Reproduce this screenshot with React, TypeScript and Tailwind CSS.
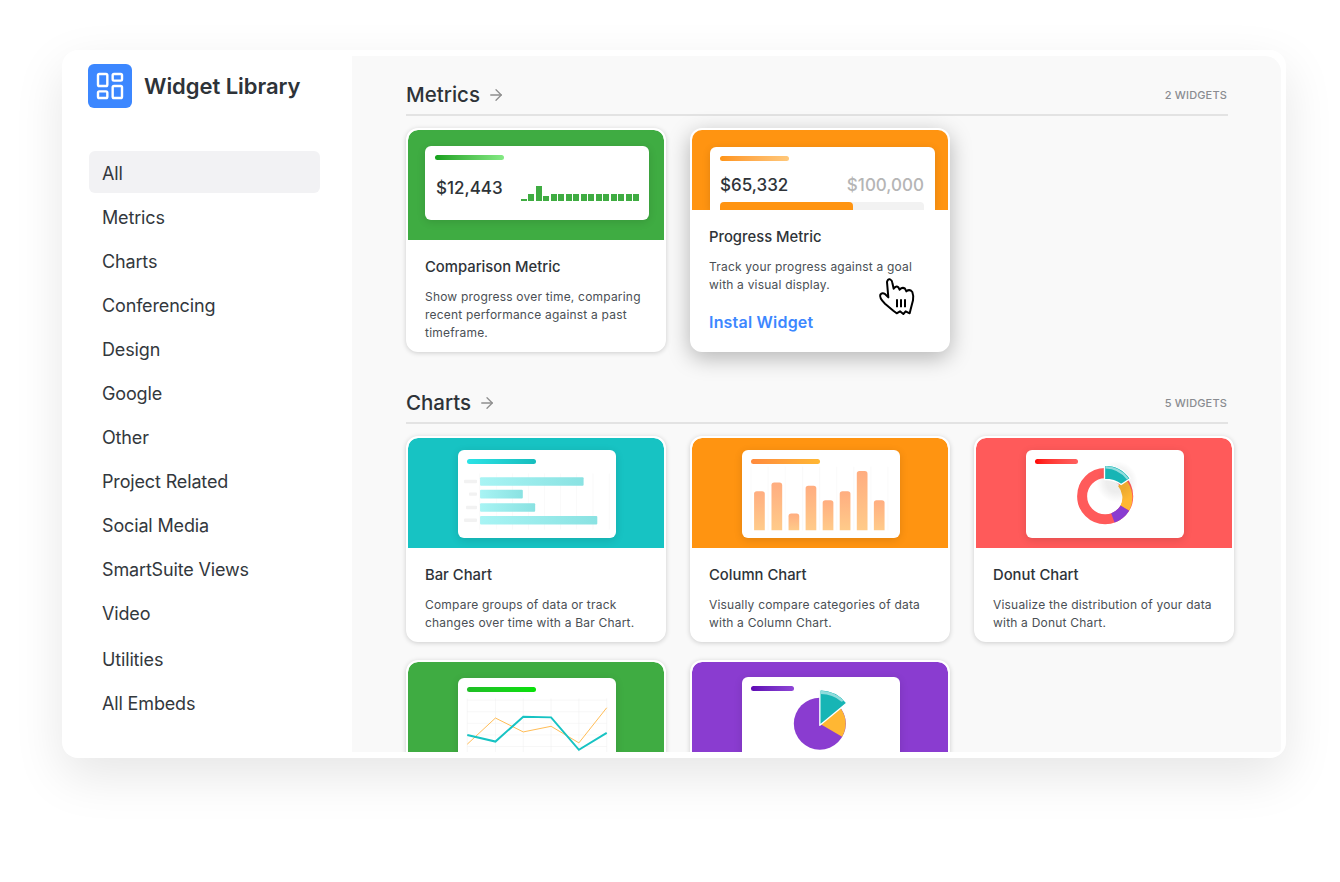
import { ArrowRight, LayoutDashboard } from "lucide-react";
import type { ReactNode } from "react";

const navItems = [
  "All",
  "Metrics",
  "Charts",
  "Conferencing",
  "Design",
  "Google",
  "Other",
  "Project Related",
  "Social Media",
  "SmartSuite Views",
  "Video",
  "Utilities",
  "All Embeds",
];

const sparkHeights = [2.5, 7, 15, 5, 7, 7, 7, 7, 7, 7, 7, 7, 7, 7, 7, 7];

const Sidebar = () => (
  <aside className="w-[290px] shrink-0 pl-[26px] pt-[14px]">
    <div className="flex items-center gap-3">
      <div className="flex h-11 w-11 items-center justify-center rounded-md bg-[#3c87ff]">
        <LayoutDashboard size={32} strokeWidth={1.8} className="text-white" />
      </div>
      <span className="text-[22px] font-semibold tracking-[-0.05px] text-[#2e3338]">Widget Library</span>
    </div>
    <nav className="ml-px mt-[43px] flex w-[231px] flex-col gap-[2px]">
      {navItems.map((item) => (
        <div
          key={item}
          className={`flex h-[42px] items-center rounded-md pl-[13px] pt-[2px] text-[18px] tracking-[-0.15px] text-[#33383d] ${
            item === "All" ? "bg-[#f2f2f4]" : ""
          } ${item === "Utilities" ? "mt-[2px]" : ""}`}
        >
          {item}
        </div>
      ))}
    </nav>
  </aside>
);

const SectionHeader = ({ title, count }: { title: string; count: string }) => (
  <div className="mb-3 flex h-9 w-[822px] items-start justify-between border-b-2 border-[#e3e3e3]">
    <div className="flex h-7 items-center gap-[7px] pt-[2px]">
      <h2 className="text-[20.5px] font-medium text-[#2e3338]">{title}</h2>
      <ArrowRight size={18} strokeWidth={1.7} className="text-[#8e8e8e]" />
    </div>
    <span className="flex h-7 items-center pr-px pt-[2px] text-[11px] font-medium uppercase tracking-[0.15px] text-[#8a8c91]">{count}</span>
  </div>
);

const Card = ({
  color,
  title,
  desc,
  art,
}: {
  color: string;
  title: string;
  desc: ReactNode;
  art: ReactNode;
}) => (
  <div className="overflow-hidden rounded-xl border-2 border-white bg-white shadow-[0_1px_5px_rgba(0,0,0,0.18)]">
    <div className={`flex h-[110px] items-start justify-center rounded-t-[10px] ${color}`}>{art}</div>
    <div className="px-[17px] pb-2 pt-[18px]">
      <h3 className="text-[14.8px] font-medium leading-[18px] text-[#2e3338]">{title}</h3>
      <p className="mt-3 text-[12px] leading-[18px] tracking-[0.2px] text-[#4a4f55]">{desc}</p>
    </div>
  </div>
);

const Panel = ({ children, accent, bar }: { children: ReactNode; accent?: string; bar: string }) => (
  <div className="relative ml-[2px] mt-3 h-[88px] w-[158px] overflow-hidden rounded-md bg-white shadow-[0_2px_8px_rgba(0,0,0,0.12)]">
    <div className={`absolute left-[9px] top-[9px] h-[5px] rounded-full ${accent ?? "w-[69px]"} ${bar}`} />
    {children}
  </div>
);

const ComparisonArt = () => (
  <div className="ml-[2px] mt-4 h-[74px] w-[224px] rounded-md bg-white px-[10px] pt-[9px] shadow-[0_2px_8px_rgba(0,0,0,0.12)]">
    <div className="h-[5px] w-[69px] rounded-full bg-gradient-to-r from-[#12a11a] to-[#84ea84]" />
    <div className="mt-[15px] flex items-end justify-between">
      <span className="ml-px text-[17px] font-medium leading-[26px] text-[#2e3338]">$12,443</span>
      <div className="flex items-end gap-[1.5px]">
        {sparkHeights.map((h, i) => (
          <div key={i} className="w-[6px] bg-[#3fac42]" style={{ height: h }} />
        ))}
      </div>
    </div>
  </div>
);

const ProgressArt = () => (
  <div className="ml-[5px] mt-[17px] h-[63px] w-[225px] overflow-hidden rounded-t-md bg-white pl-[10px] pr-[11px] pt-[9px] shadow-[0_2px_8px_rgba(0,0,0,0.12)]">
    <div className="h-[5px] w-[69px] rounded-full bg-gradient-to-r from-[#ff9411] to-[#ffc87a]" />
    <div className="mt-[11px] flex items-center justify-between text-[17px] font-medium leading-[26px]">
      <span className="text-[#2e3338]">$65,332</span>
      <span className="text-[#b5b5b5]">$100,000</span>
    </div>
    <div className="mt-[4px] h-2 overflow-hidden rounded-t-sm bg-[#f2f2f2]">
      <div className="h-full w-[133px] rounded-tr-sm bg-[#ff9411]" />
    </div>
  </div>
);

const BarArt = () => (
  <Panel bar="bg-gradient-to-r from-[#2be3e6] to-[#16bdbd]">
    <svg viewBox="54 30 473 263" className="absolute inset-0 h-full w-full">
      <defs>
        <linearGradient id="barFill" x1="0" x2="1" y1="0" y2="0">
          <stop offset="0" stopColor="#a8f4f4" />
          <stop offset="1" stopColor="#8ae2e2" />
        </linearGradient>
      </defs>
      {[119, 169, 217, 265, 313, 361, 409, 458, 507].map((x) => (
        <line key={x} x1={x} x2={x} y1="100" y2="268" stroke="#f4f5f5" strokeWidth="1.5" />
      ))}
      <rect x="120" y="111" width="310" height="26" rx="3" fill="url(#barFill)" />
      <rect x="120" y="149" width="128" height="26" rx="3" fill="url(#barFill)" />
      <rect x="120" y="189" width="165" height="26" rx="3" fill="url(#barFill)" />
      <rect x="120" y="227" width="351" height="26" rx="3" fill="url(#barFill)" />
      <rect x="72" y="119" width="39" height="10" rx="3" fill="#f2f2f2" />
      <rect x="87" y="157" width="24" height="10" rx="3" fill="#f2f2f2" />
      <rect x="78" y="197" width="33" height="10" rx="3" fill="#f2f2f2" />
      <rect x="72" y="235" width="39" height="10" rx="3" fill="#f2f2f2" />
    </svg>
  </Panel>
);

const ColumnArt = () => (
  <Panel bar="bg-gradient-to-r from-[#ff8a3d] to-[#ffb733]">
    <svg viewBox="37 30 472 263" className="absolute inset-0 h-full w-full">
      <defs>
        <linearGradient id="colFill" x1="0" x2="0" y1="0" y2="1">
          <stop offset="0" stopColor="#ffad80" />
          <stop offset="1" stopColor="#ffcb8a" />
        </linearGradient>
      </defs>
      {[64, 115, 166, 218, 269, 320, 371, 422, 473].map((x) => (
        <line key={x} x1={x} x2={x} y1="80" y2="270" stroke="#f5f5f5" strokeWidth="1.5" />
      ))}
      {[
        [73, 153],
        [125, 127],
        [176, 220],
        [227, 137],
        [278, 180],
        [329, 153],
        [380, 93],
        [431, 180],
      ].map(([x, y]) => (
        <path key={x} d={`M${x} 270V${y + 8}q0-8 8-8h16q8 0 8 8V270z`} fill="url(#colFill)" />
      ))}
    </svg>
  </Panel>
);

const DonutArt = () => (
  <Panel accent="w-[43px]" bar="bg-gradient-to-r from-[#ff0000] to-[#ff6060]">
    <svg viewBox="33 30 473 263" className="absolute inset-0 h-full w-full">
      <defs>
        <radialGradient id="donutShade" cx="0.5" cy="0.5" r="0.5">
          <stop offset="0.5" stopColor="#000" stopOpacity="0.07" />
          <stop offset="1" stopColor="#000" stopOpacity="0" />
        </radialGradient>
      </defs>
      <circle cx="270" cy="168" r="69" fill="none" stroke="#ff5a5a" strokeWidth="30" />
      <path d="M320 128A69 69 0 0 1 329 204" fill="none" stroke="#ffb733" strokeWidth="30" />
      <path d="M329 204A69 69 0 0 1 293 233" fill="none" stroke="#8a3cd0" strokeWidth="30" />
      <circle cx="305" cy="125" r="62" fill="url(#donutShade)" />
      <path d="M268 75A93 93 0 0 1 345 115L318 133Q298 118 268 118Z" fill="#17b5b5" stroke="#fff" strokeWidth="4" strokeLinejoin="round" />
      <path d="M271 78A90 90 0 0 1 340 114L335 118A84 84 0 0 0 271 85Z" fill="#8fdcdc" />
    </svg>
  </Panel>
);

const LineArt = () => (
  <Panel bar="bg-gradient-to-r from-[#1fbd26] to-[#08e108]">
    <svg viewBox="174 69 477 264" className="absolute inset-0 h-full w-full">
      {[202, 287, 371, 455, 539, 623].map((x) => (
        <line key={x} x1={x} x2={x} y1="130" y2="300" stroke="#efefef" strokeWidth="1.5" />
      ))}
      {[135, 170, 205, 240, 275].map((y) => (
        <line key={y} x1="202" x2="623" y1={y} y2={y} stroke="#efefef" strokeWidth="1.5" />
      ))}
      <polyline points="202,268 287,189 371,231 455,214 539,264 623,158" fill="none" stroke="#ffbb55" strokeWidth="3" />
      <polyline points="202,240 287,260 371,185 455,187 539,285 623,234" fill="none" stroke="#17c3c3" strokeWidth="6" />
    </svg>
  </Panel>
);

const PieArt = () => (
  <Panel accent="w-[43px]" bar="bg-gradient-to-r from-[#5f06b4] to-[#8f45d6]">
    <svg viewBox="171 67 473 264" className="absolute inset-0 h-full w-full">
      <circle cx="404" cy="207" r="78" fill="#8a3cd0" />
      <path d="M404 207L442 139A78 78 0 0 1 471 246Z" fill="#ffb733" />
      <path d="M404 212V105A105 105 0 0 1 485 145Z" fill="#17b5b5" stroke="#fff" strokeWidth="4" strokeLinejoin="round" />
      <path d="M407 108A102 102 0 0 1 477 138L469 141A94 94 0 0 0 407 118Z" fill="#8fdcdc" />
    </svg>
  </Panel>
);

// grabby hand cursor sitting over the hovered card
const HandCursor = () => (
  <svg viewBox="0 0 144 144" className="absolute left-[183px] top-[142px] h-12 w-12">
    <path
      d="M36 30Q38 20 45 22Q51 24 52 32L56 50Q63 40 70 46L74 53Q82 44 90 50L94 58Q104 50 112 60Q116 70 114 85L107 112L104 124L92 118L85 126L75 118L65 124L55 116L30 95Q12 78 16 68Q22 60 30 66L40 76Z"
      fill="#fff"
      stroke="#000"
      strokeWidth="6"
      strokeLinejoin="round"
    />
    <path d="M66 82V106M78 82V106M90 82V106" stroke="#000" strokeWidth="6" />
  </svg>
);

const ProgressCard = () => (
  <div className="relative h-[224px] overflow-visible rounded-xl border-2 border-white bg-white shadow-[0_6px_22px_rgba(0,0,0,0.28)]">
    <div className="flex h-20 items-start justify-center overflow-hidden rounded-t-[10px] bg-[#ff9411]">
      <ProgressArt />
    </div>
    <div className="px-[17px] pt-[18px]">
      <h3 className="text-[14.8px] font-medium leading-[18px] text-[#2e3338]">Progress Metric</h3>
      <p className="mt-3 text-[12px] leading-[18px] tracking-[0.2px] text-[#4a4f55]">
        Track your progress against a goal
        <br />
        with a visual display.
      </p>
      <div className="mt-4 text-[16px] font-semibold leading-[24px] tracking-[0.2px] text-[#3c87ff]">Instal Widget</div>
    </div>
    <HandCursor />
  </div>
);

const App = () => (
  <div className="h-[882px] w-[1340px] overflow-hidden bg-white pl-[62px] pt-[50px] font-['Inter',sans-serif]">
    <div className="flex h-[708px] w-[1224px] rounded-2xl bg-white py-[6px] pr-[5px] shadow-[0_18px_50px_rgba(0,0,0,0.1)]">
      <div className="-my-[6px] flex">
        <Sidebar />
      </div>
      <main className="flex-1 overflow-hidden rounded-tr-2xl rounded-br-sm bg-[#f9f9f9] pl-[54px] pt-6">
        <section>
          <SectionHeader title="Metrics" count="2 Widgets" />
          <div className="grid grid-cols-[260px_260px_260px] gap-x-6">
            <div className="h-[224px]">
              <Card
                color="bg-[#3fac42]"
                title="Comparison Metric"
                art={<ComparisonArt />}
                desc={
                  <>
                    Show progress over time, comparing
                    <br />
                    recent performance against a past
                    <br />
                    timeframe.
                  </>
                }
              />
            </div>
            <ProgressCard />
          </div>
        </section>
        <section className="mt-9">
          <SectionHeader title="Charts" count="5 Widgets" />
          <div className="grid grid-cols-[260px_260px_260px] gap-x-6 gap-y-[18px]">
            <Card
              color="bg-[#17c3c3]"
              title="Bar Chart"
              art={<BarArt />}
              desc={
                <>
                  Compare groups of data or track
                  <br />
                  changes over time with a Bar Chart.
                </>
              }
            />
            <Card
              color="bg-[#ff9411]"
              title="Column Chart"
              art={<ColumnArt />}
              desc={
                <>
                  Visually compare categories of data
                  <br />
                  with a Column Chart.
                </>
              }
            />
            <Card
              color="bg-[#ff5a5a]"
              title="Donut Chart"
              art={<DonutArt />}
              desc={
                <>
                  Visualize the distribution of your data
                  <br />
                  with a Donut Chart.
                </>
              }
            />
            <div className="h-[92px]">
              <Card color="bg-[#3fac42]" title="" art={<div className="mt-[4px]"><LineArt /></div>} desc="" />
            </div>
            <div className="h-[92px]">
              <Card color="bg-[#8a3cd0]" title="" art={<div className="mt-[3px]"><PieArt /></div>} desc="" />
            </div>
          </div>
        </section>
      </main>
    </div>
  </div>
);

export default App;
